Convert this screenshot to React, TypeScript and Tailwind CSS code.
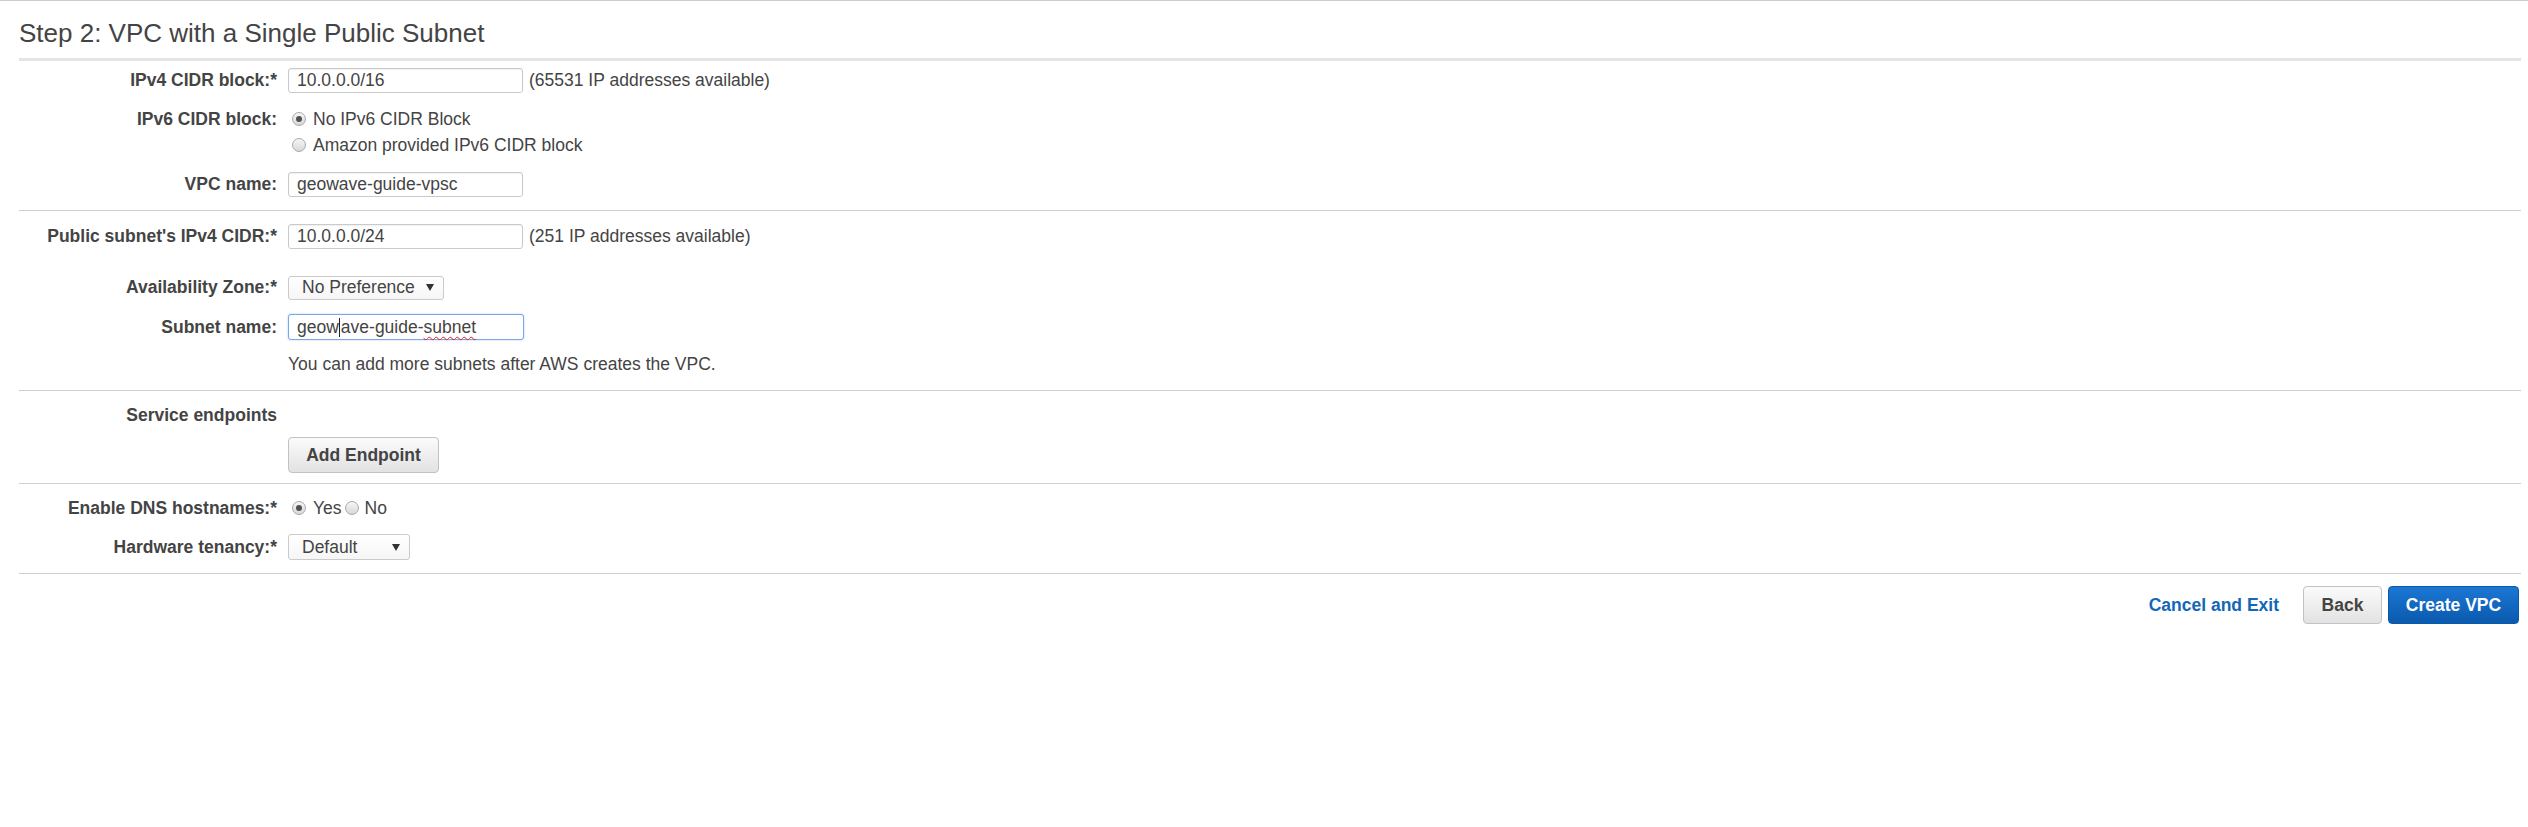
import type { ReactNode } from "react";
import clsx from "clsx";

const Radio = ({ checked, className }: { checked?: boolean; className?: string }) => {
  return (
    <span
      className={clsx(
        "flex h-[14px] w-[14px] shrink-0 items-center justify-center rounded-full border border-[#a8a8a8] bg-linear-to-b from-[#f6f6f6] to-[#d8d8d8]",
        className
      )}
    >
      {checked && <span className="h-[6px] w-[6px] rounded-full bg-[#505050]" />}
    </span>
  );
};

const Caret = () => (
  <svg width="8" height="7" viewBox="0 0 8 7" className="shrink-0">
    <polygon points="0,0 8,0 4,7" fill="#333" />
  </svg>
);

const Row = ({
  label,
  children,
  className,
  top,
}: {
  label: ReactNode;
  children?: ReactNode;
  className?: string;
  top?: boolean;
}) => {
  return (
    <div
      className={clsx(
        "grid grid-cols-[258px_1fr] gap-x-[11px]",
        top ? "items-start" : "items-center",
        className
      )}
    >
      <div className="text-right font-bold text-[#444]">{label}</div>
      <div className="flex items-center">{children}</div>
    </div>
  );
};

const TextBox = ({ value, width = "w-[235px]" }: { value: string; width?: string }) => (
  <div
    className={clsx(
      "flex h-[25px] items-center rounded-[3px] border border-[#cacaca] bg-white px-[8px] text-[#444] shadow-[inset_0_1px_1px_rgba(0,0,0,0.06)]",
      width
    )}
  >
    {value}
  </div>
);

const Select = ({ value, width, height }: { value: string; width: string; height: string }) => (
  <div
    className={clsx(
      "flex items-center justify-between rounded-[3px] border border-[#cacaca] bg-linear-to-b from-white to-[#f6f6f6] pl-[13px] pr-[9px] text-[#444]",
      width,
      height
    )}
  >
    <span>{value}</span>
    <Caret />
  </div>
);

const GrayButton = ({ children, className }: { children: ReactNode; className?: string }) => (
  <div
    className={clsx(
      "flex items-center justify-center whitespace-nowrap rounded-[4px] border border-[#c2c2c2] bg-linear-to-b from-[#fbfbfb] to-[#e2e2e2] font-bold text-[#444]",
      className
    )}
  >
    {children}
  </div>
);

export default function App() {
  return (
    <div className="min-h-[827px] w-full border-t border-[#cccccc] bg-white font-['Liberation_Sans',Arial,sans-serif] text-[17.5px] leading-[25px] text-[#444]">
      <div className="ml-[19px] w-[2502px]">
        <h2 className="border-b-[3px] border-[#e4e4e4] pt-[18px] pb-[10px] text-[26px] leading-[29px] font-normal text-[#444]">
          Step 2: VPC with a Single Public Subnet
        </h2>

        <div className="border-b border-[#cfcfcf] pb-[13px]">
          <Row label="IPv4 CIDR block:*" className="mt-[7px]">
            <TextBox value="10.0.0.0/16" />
            <span className="ml-[6px]">(65531 IP addresses available)</span>
          </Row>
          <Row label={<span className="leading-[26px]">IPv6 CIDR block:</span>} className="mt-[13px]" top>
            <div className="flex flex-col leading-[26px]">
              <div className="flex items-center gap-[7px] pl-[4px]">
                <Radio checked />
                <span>No IPv6 CIDR Block</span>
              </div>
              <div className="flex items-center gap-[7px] pl-[4px]">
                <Radio />
                <span>Amazon provided IPv6 CIDR block</span>
              </div>
            </div>
          </Row>
          <Row label="VPC name:" className="mt-[14px]">
            <TextBox value="geowave-guide-vpsc" />
          </Row>
        </div>

        <div className="border-b border-[#cfcfcf] pb-[13px]">
          <Row label="Public subnet's IPv4 CIDR:*" className="mt-[13px]">
            <TextBox value="10.0.0.0/24" />
            <span className="ml-[6px]">(251 IP addresses available)</span>
          </Row>
          <Row label="Availability Zone:*" className="mt-[26px]">
            <Select value="No Preference" width="w-[156px]" height="h-[24px]" />
          </Row>
          <Row label="Subnet name:" className="mt-[14px]">
            <div className="flex h-[26px] w-[236px] items-center rounded-[3px] border border-[#79a7e6] bg-white px-[8px] text-[#444] shadow-[0_0_2px_rgba(102,160,230,0.6)]">
              geow
              <span className="mx-[0.5px] inline-block h-[19px] w-px bg-[#222]" />
              ave-guide-
              <span className="underline decoration-[#e02020] decoration-wavy decoration-1 underline-offset-[3px]">
                subnet
              </span>
            </div>
          </Row>
          <Row label="" className="mt-[12px]">
            <span>You can add more subnets after AWS creates the VPC.</span>
          </Row>
        </div>

        <div className="border-b border-[#cfcfcf] pb-[10px]">
          <Row label="Service endpoints" className="mt-[12px]" />
          <Row label="" className="mt-[9px]">
            <GrayButton className="h-[36px] w-[151px]">Add Endpoint</GrayButton>
          </Row>
        </div>

        <div className="border-b border-[#cfcfcf] pb-[13px]">
          <Row label="Enable DNS hostnames:*" className="mt-[11px] h-[26px]">
            <div className="flex items-center pl-[4px]">
              <Radio checked />
              <span className="ml-[7px]">Yes</span>
              <Radio className="ml-[3px]" />
              <span className="ml-[6px]">No</span>
            </div>
          </Row>
          <Row label="Hardware tenancy:*" className="mt-[13px]">
            <Select value="Default" width="w-[122px]" height="h-[26px]" />
          </Row>
        </div>

        <div className="mt-[12px] flex items-center justify-end">
          <span className="mr-[24px] font-bold text-[#1466b8]">Cancel and Exit</span>
          <GrayButton className="h-[38px] w-[79px]">Back</GrayButton>
          <div className="ml-[6px] flex h-[38px] w-[131px] items-center justify-center whitespace-nowrap rounded-[4px] border border-[#0a58a8] bg-linear-to-b from-[#1b77d4] to-[#0a5aae] font-bold text-white">
            Create VPC
          </div>
          <span className="w-[2px]" />
        </div>
      </div>
    </div>
  );
}
